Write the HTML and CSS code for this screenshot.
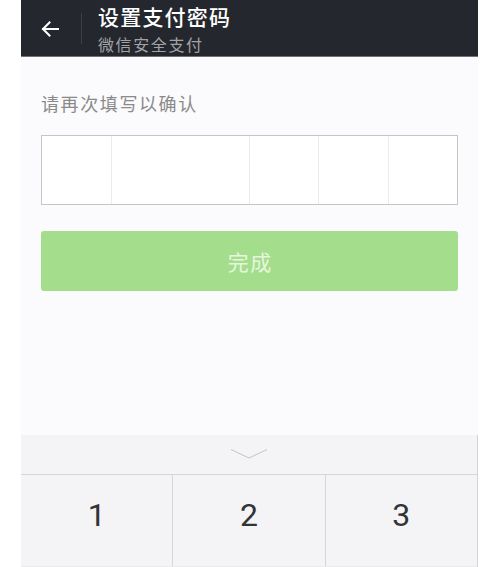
FILE: index.html
```html
<!DOCTYPE html>
<html lang="zh-CN">
<head>
<meta charset="utf-8">
<title>设置支付密码</title>
<link rel="stylesheet" href="styles.css">
</head>
<body>
<div class="phone">
  <header class="topbar">
    <span class="back">
      <svg width="18" height="16" viewBox="0 0 18 16"><path d="M17 8H2M8.5 1.5L2 8l6.5 6.5" fill="none" stroke="#ffffff" stroke-width="2" stroke-linecap="square"/></svg>
    </span>
    <span class="divider"></span>
    <div class="titles">
      <div class="title">设置支付密码</div>
      <div class="subtitle">微信安全支付</div>
    </div>
  </header>
  <main class="content">
    <p class="label">请再次填写以确认</p>
    <div class="pwbox">
      <span class="cell"></span>
      <span class="cell nodiv"></span>
      <span class="cell"></span>
      <span class="cell"></span>
      <span class="cell"></span>
      <span class="cell last"></span>
    </div>
    <button class="done">完成</button>
  </main>
  <section class="keyboard">
    <div class="kbhead">
      <svg width="38" height="12" viewBox="0 0 38 12"><path d="M1 1.5L19 10L37 1.5" fill="none" stroke="#c4c4c8" stroke-width="1"/></svg>
    </div>
    <div class="keys">
      <div class="key">1</div>
      <div class="key">2</div>
      <div class="key">3</div>
    </div>
  </section>
</div>
</body>
</html>
```
FILE: styles.css
```css
* { box-sizing: border-box; }
html, body { margin: 0; padding: 0; background: #ffffff; }
body { font-family: "Noto Sans CJK SC", "Noto Sans", sans-serif; overflow: hidden; }

.phone {
  margin-left: 21px;
  width: 457px;
  height: 567px;
  background: #fbfbfd;
  display: flex;
  flex-direction: column;
  overflow: hidden;
}

.topbar {
  height: 57px;
  flex: none;
  background: #24272e;
  border-bottom: 1px solid #707174;
  display: flex;
  align-items: center;
  padding-left: 20px;
}
.back { display: flex; width: 18px; height: 16px; margin-top: 1px; }
.divider {
  width: 1px;
  height: 31px;
  background: #3c3f45;
  margin-left: 22px;
  margin-top: 1px;
}
.titles { margin-left: 16px; display: flex; flex-direction: column; }
.title {
  color: #ffffff;
  font-size: 21px;
  line-height: 26px;
  font-weight: 500;
  letter-spacing: 1.2px;
}
.subtitle {
  color: #a2a3a6;
  font-size: 16px;
  line-height: 20px;
  margin-top: 5px;
  letter-spacing: 1.6px;
}

.content { padding: 0 20px; }
.label {
  margin: 34px 0 0 0;
  font-size: 18px;
  line-height: 24px;
  letter-spacing: 1.6px;
  color: #8a8a8a;
}

.pwbox {
  margin-top: 20px;
  height: 70px;
  border: 1px solid #c6c6c6;
  background: #ffffff;
  display: flex;
}
.cell { flex: 1; border-right: 1px solid #ececec; }
.cell.nodiv, .cell.last { border-right: none; }

.done {
  display: block;
  width: 100%;
  margin-top: 26px;
  height: 60px;
  border: none;
  border-radius: 3px;
  background: #a4de8d;
  color: #e6f6de;
  font-family: "Noto Sans CJK SC", "Noto Sans", sans-serif;
  font-size: 21px;
  letter-spacing: 1.5px;
  text-indent: 1.5px;
  padding: 0;
}

.keyboard {
  margin-top: auto;
  flex: none;
  background: #f4f3f6;
  border-right: 1px solid #d4d4d6;
}
.kbhead {
  height: 40px;
  border-bottom: 1px solid #d6d6d8;
  display: flex;
  justify-content: center;
  align-items: flex-start;
  padding-top: 13px;
}
.keys { display: flex; height: 92px; }
.key {
  flex: 1;
  font-family: Roboto, "Liberation Sans", sans-serif;
  font-size: 32px;
  color: #333336;
  text-align: center;
  line-height: 80px;
  border-right: 1px solid #d6d6d8;
  border-bottom: 1px solid #ebeaed;
}
.key:last-child { border-right: none; }
```
